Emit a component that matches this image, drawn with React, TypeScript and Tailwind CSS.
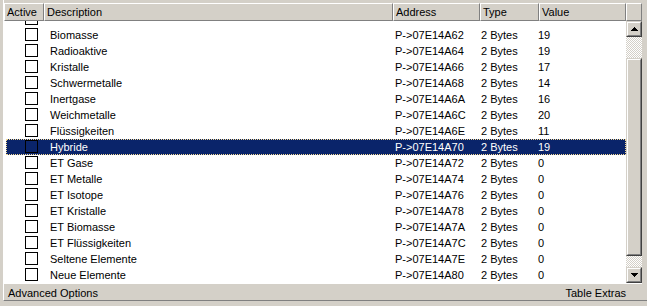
import React from 'react';

interface Entry {
  description: string;
  address: string;
  value: string;
  selected?: boolean;
}

const entries: Entry[] = [
  { description: 'Biomasse', address: 'P->07E14A62', value: '19' },
  { description: 'Radioaktive', address: 'P->07E14A64', value: '19' },
  { description: 'Kristalle', address: 'P->07E14A66', value: '17' },
  { description: 'Schwermetalle', address: 'P->07E14A68', value: '14' },
  { description: 'Inertgase', address: 'P->07E14A6A', value: '16' },
  { description: 'Weichmetalle', address: 'P->07E14A6C', value: '20' },
  { description: 'Flüssigkeiten', address: 'P->07E14A6E', value: '11' },
  { description: 'Hybride', address: 'P->07E14A70', value: '19', selected: true },
  { description: 'ET Gase', address: 'P->07E14A72', value: '0' },
  { description: 'ET Metalle', address: 'P->07E14A74', value: '0' },
  { description: 'ET Isotope', address: 'P->07E14A76', value: '0' },
  { description: 'ET Kristalle', address: 'P->07E14A78', value: '0' },
  { description: 'ET Biomasse', address: 'P->07E14A7A', value: '0' },
  { description: 'ET Flüssigkeiten', address: 'P->07E14A7C', value: '0' },
  { description: 'Seltene Elemente', address: 'P->07E14A7E', value: '0' },
  { description: 'Neue Elemente', address: 'P->07E14A80', value: '0' },
];

const HeaderCell = ({ label, className }: { label: string; className: string }) => (
  <div
    className={`h-full shrink-0 border-l border-t border-r border-b border-l-white border-t-white border-r-[#808080] border-b-[#808080] pl-[2px] leading-[16px] ${className}`}
  >
    {label}
  </div>
);

// classic raised 3D box (scroll buttons, thumb)
const Raised = ({ className, children }: { className: string; children?: React.ReactNode }) => (
  <div
    className={`border border-t-[#d4d0c8] border-l-[#d4d0c8] border-r-[#404040] border-b-[#404040] ${className}`}
  >
    <div className="flex h-full w-full items-center justify-center border border-t-white border-l-white border-r-[#808080] border-b-[#808080] bg-[#d4d0c8]">
      {children}
    </div>
  </div>
);

const Row = ({ entry, hidden }: { entry?: Entry; hidden?: boolean }) => {
  const sel = entry?.selected;
  return (
    <div
      className={`grid h-[16px] grid-cols-[38px_349px_87px_58px_1fr] leading-[14px] ${
        sel ? 'border border-dotted border-[#f5db95] bg-[#0a246a] text-white' : 'border border-transparent'
      }`}
    >
      <div className="flex items-start">
        <div
          className={`ml-[18px] mt-0 h-[13px] w-[13px] border border-black ${sel ? 'bg-[#0a246a]' : 'bg-white'}`}
        />
      </div>
      <div className="pl-[5px]">{hidden ? '' : entry?.description}</div>
      <div className="pl-[1px]">{hidden ? '' : entry?.address}</div>
      <div>{hidden ? '' : '2 Bytes'}</div>
      <div className="-ml-[1px]">{hidden ? '' : entry?.value}</div>
    </div>
  );
};

export default function App() {
  return (
    <div className="h-[306px] w-[647px] overflow-hidden bg-[#d4d0c8] pl-[3px] font-['Liberation_Sans',Arial,sans-serif] text-[11px] text-black">
      <div className="flex h-[301px] flex-col border-l border-l-white pr-[5px] pt-[3px] border-b border-b-[#808080]">
        {/* column header */}
        <div className="flex h-[18px] shrink-0">
          <HeaderCell label="Active" className="w-[40px]" />
          <HeaderCell label="Description" className="w-[349px]" />
          <HeaderCell label="Address" className="w-[87px]" />
          <HeaderCell label="Type" className="w-[59px]" />
          <HeaderCell label="Value" className="w-[87px]" />
          <HeaderCell label="" className="w-[16px]" />
        </div>

        {/* list + scrollbar */}
        <div className="flex h-[262px] shrink-0">
          <div className="h-full w-[622px] overflow-hidden bg-white pl-[2px]">
            <div className="-mt-[10px]">
              <Row hidden />
              {entries.map((e) => (
                <Row key={e.address} entry={e} />
              ))}
            </div>
          </div>
          <div className="flex h-full w-[16px] flex-col">
            <Raised className="h-[16px] w-[16px] shrink-0">
              <svg width="7" height="4" viewBox="0 0 7 4">
                <path d="M3 0h1v1h1v1h1v1h1v1H0V3h1V2h1V1h1z" fill="#000" />
              </svg>
            </Raised>
            <div className="flex flex-1 flex-col bg-[repeating-conic-gradient(#d4d0c8_0_25%,#ffffff_0_50%)] bg-[length:2px_2px]">
              <div className="h-[21px]" />
              <Raised className="h-[198px] w-[16px]" />
            </div>
            <Raised className="h-[16px] w-[16px] shrink-0">
              <svg width="7" height="4" viewBox="0 0 7 4">
                <path d="M0 0h7v1H6v1H5v1H4v1H3V3H2V2H1V1H0z" fill="#000" />
              </svg>
            </Raised>
          </div>
        </div>

        {/* status bar */}
        <div className="flex h-[17px] shrink-0 items-start justify-between border-t border-t-white pl-[4px] pr-[16px] pt-[2px] leading-[14px]">
          <span>Advanced Options</span>
          <span>Table Extras</span>
        </div>
      </div>
    </div>
  );
}
